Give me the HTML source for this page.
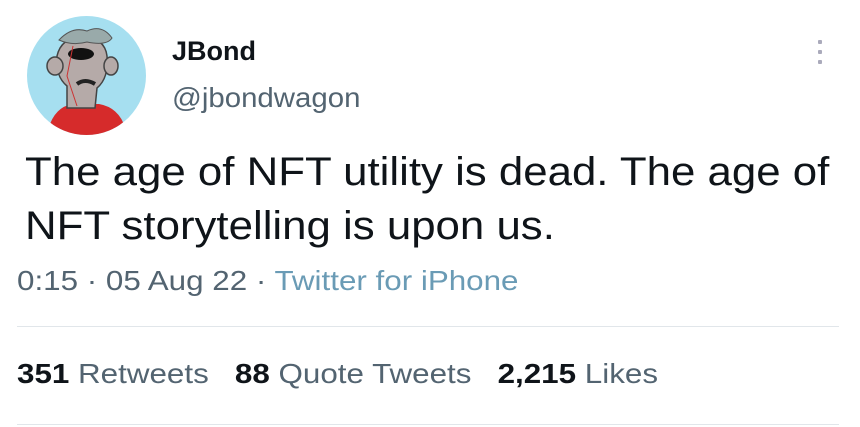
<!DOCTYPE html>
<html><head><style>
body{margin:0;width:860px;height:427px;background:#fff;font-family:"Liberation Sans",sans-serif;position:relative;overflow:hidden}
.a{position:absolute;white-space:nowrap}
.sx{transform-origin:0 0}
</style></head><body>
<div class="a" style="left:27px;top:16px;width:119px;height:119px;border-radius:50%;background:#a6dff0;overflow:hidden">
<svg width="119" height="119" viewBox="0 0 119 119">
<path d="M20 119 Q25 92 45 88 L72 88 Q95 92 100 119Z" fill="#d62b2b"/>
<path d="M40 92 L40 70 Q28 60 30 40 Q34 22 55 20 Q78 22 80 40 Q82 62 70 72 L68 92Z" fill="#b5aaa8" stroke="#444" stroke-width="1.5"/>
<ellipse cx="28" cy="50" rx="8" ry="9" fill="#b5aaa8" stroke="#444" stroke-width="1.5"/>
<ellipse cx="84" cy="50" rx="7" ry="9" fill="#b5aaa8" stroke="#444" stroke-width="1.5"/>
<path d="M32 24 Q45 10 60 15 Q75 8 85 22 Q80 30 60 26 Q45 30 32 24Z" fill="#9aa" stroke="#555"/>
<ellipse cx="54" cy="38" rx="13" ry="6" fill="#111"/>
<path d="M50 68 Q58 62 68 68" stroke="#222" stroke-width="4" fill="none"/>
<path d="M46 30 L40 60 L50 90" stroke="#c33" stroke-width="1" fill="none"/>
</svg></div>
<div class="a" style="left:172px;top:36px;font-size:27px;font-weight:bold;color:#0f1419">JBond</div>
<div class="a sx" style="left:172px;top:82px;font-size:28px;color:#536471;transform:scaleX(1.05)">@jbondwagon</div>
<div style="position:absolute;left:818px;top:40px;width:4px;height:4px;background:#aab;border-radius:1px;box-shadow:0 10px 0 #aab,0 20px 0 #aab"></div>
<div class="a sx" style="left:25px;top:145px;font-size:40px;line-height:54px;color:#0f1419;transform:scaleX(1.095)">The age of NFT utility is dead. The age of<br>NFT storytelling is upon us.</div>
<div class="a sx" style="left:17px;top:265px;font-size:28px;color:#536471;transform:scaleX(1.12)">0:15 · 05 Aug 22 · <span style="color:#6a9bb5">Twitter for iPhone</span></div>
<div style="position:absolute;left:17px;top:326px;width:822px;height:1px;background:#e1e6ea"></div>
<div class="a sx" style="left:17px;top:358px;font-size:28px;color:#536471;transform:scaleX(1.12)"><b style="color:#0f1419">351</b> Retweets &nbsp; <b style="color:#0f1419">88</b> Quote Tweets &nbsp; <b style="color:#0f1419">2,215</b> Likes</div>
<div style="position:absolute;left:17px;top:424px;width:822px;height:1px;background:#e1e6ea"></div>
</body></html>
